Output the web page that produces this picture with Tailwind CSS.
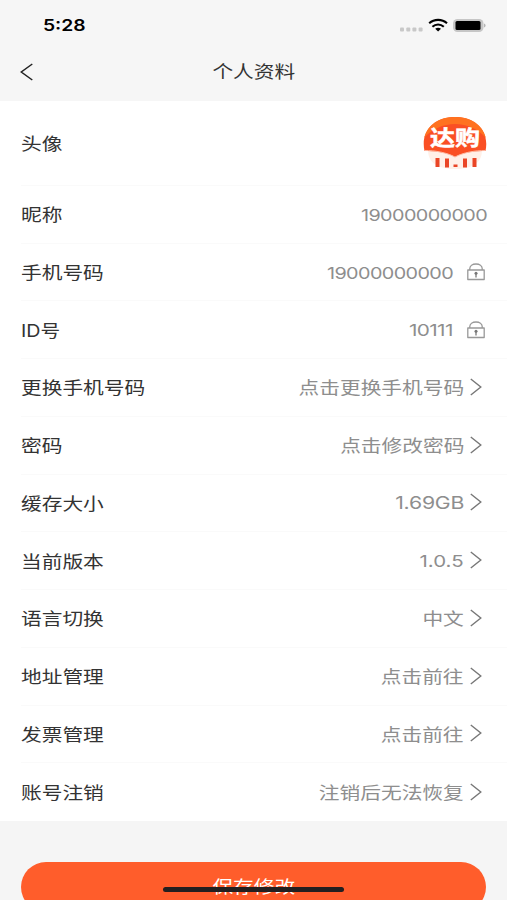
<!DOCTYPE html>
<html lang="zh-CN">
<head>
    <meta charset="UTF-8">
    <meta name="viewport" content="width=device-width, initial-scale=1.0">
    <title>个人资料</title>
    <script src="https://cdn.jsdelivr.net/npm/@tailwindcss/browser@4"></script>
</head>

<body class="bg-[#f5f5f5] font-['Inter','Noto_Sans_CJK_SC',sans-serif] text-[17.4px] text-[#333] h-[900px] overflow-hidden relative whitespace-nowrap">
    <svg class="hidden">
        <symbol id="lock" viewBox="0 0 20 18">
            <path d="M1.800 7h16.400v9.500H1.800zM3.800 7V5.500C3.800 2.800 6.500 1 10 1s6.200 1.800 6.200 4.500V7" fill="none" stroke="#999" stroke-width="1.300" stroke-linejoin="round"/>
            <path d="M10 10v4.500" stroke="#777" stroke-width="1.300"/>
            <circle cx="10" cy="10.300" r="1.500" fill="#777"/>
        </symbol>
        <symbol id="arrow" viewBox="0 0 12 18">
            <path d="M.8 1l10 8-10 8" fill="none" stroke="#777" stroke-width="1.400"/>
        </symbol>
    </svg>

    <header class="h-[101px] bg-[#f6f6f6]">
        <div class="h-[46px] pt-[5px] pl-[43px] pr-[20px] flex items-center justify-between text-black">
            <span class="origin-left scale-x-[1.22] pt-px text-[15.8px] font-semibold">5:28</span>
            <svg class="w-[88px] h-[16px]" viewBox="0 0 88 16">
                <g fill="#c8c8c8">
                    <rect x="1" y="9.500" width="4" height="4" rx="1"/>
                    <rect x="7.300" y="9.500" width="4" height="4" rx="1"/>
                    <rect x="13.400" y="9.500" width="4" height="4" rx="1"/>
                    <rect x="19.600" y="9.500" width="4" height="4" rx="1"/>
                </g>
                <g fill="none" stroke="#000" stroke-width="2.100">
                    <path d="M30.200 5.300c5-4.600 12.800-4.600 17.800 0"/>
                    <path d="M33.400 8.700c3.300-3 8.100-3 11.400 0"/>
                </g>
                <path d="M36.200 10.800c1.700-1.500 4.100-1.500 5.800 0l-2.900 2.700z"/>
                <rect x="54" y="1" width="30.500" height="13" rx="4.500" fill="#c6c6c6"/>
                <rect x="56.500" y="3" width="25" height="9" rx="1.500"/>
                <path d="M85.300 5.500c1.500.5 1.500 3.500 0 4z" fill="#999"/>
            </svg>
        </div>
        <div class="relative h-[50px] flex items-center justify-center">
            <svg class="absolute left-[20px] top-[17px] w-[13px] h-[18px]" viewBox="0 0 13 18" fill="none" stroke="#222" stroke-width="1.500">
                <path d="M12.300 1L1.300 9l11 8"/>
            </svg>
            <h1 class="scale-x-[1.19] pt-[2px]">个人资料</h1>
        </div>
    </header>

    <main class="h-[720px] bg-white">
        <div class="ml-[21px] pr-[19px] h-[85px] flex items-center justify-between border-b border-[#fafafa]">
            <span class="origin-left scale-x-[1.19] pt-[2px]">头像</span>
            <svg class="w-[66px] h-[56px]" viewBox="0 0 66 56">
                <path d="M6 35h54c0 13-10 19-27 19S6 48 6 35z" fill="#fff0e8"/>
                <path d="M2.500 36C-2 15 14 2 33 2s35 13 30.500 34c-11 0-22 1-30.500 6-8.500-5-19.500-6-30.500-6z" fill="#fa4f24"/>
                <path d="M2 23C6 9 17 2 33 2s27 7 31 21C56 14 45 9 33 9S10 14 2 23z" fill="#ff7220"/>
                <path d="M2.500 35.500c11 0 22 2 30.500 6.500 8.500-4.500 19.500-6.500 30.500-6.500" fill="none" stroke="#ffb9a2" stroke-width="1"/>
                <g fill="#ea4526">
                    <rect x="13.500" y="43" width="4" height="9"/>
                    <rect x="23" y="43.500" width="4" height="9"/>
                    <rect x="31.500" y="49.500" width="4" height="2.500"/>
                    <rect x="41" y="43.500" width="4" height="9"/>
                    <rect x="50.500" y="43" width="4" height="9"/>
                </g>
                <text x="8" y="30" textLength="50" lengthAdjust="spacingAndGlyphs" font-size="21" font-weight="700" fill="#fff" stroke="#fff" stroke-width=".5">达购</text>
            </svg>
        </div>

        <div class="h-[635px] grid grid-rows-11 text-[#8e8e8e]">
            <div class="ml-[21px] pr-[20px] flex items-center justify-between border-b border-[#fafafa]">
                <span class="origin-left scale-x-[1.19] pt-[2px] text-[#333]">昵称</span>
                <span class="origin-right scale-x-[1.2] pt-[2px] text-[16.500px] tracking-[-0.5px]">19000000000</span>
            </div>
            <div class="ml-[21px] pr-[21px] flex items-center border-b border-[#fafafa]">
                <span class="origin-left scale-x-[1.19] pt-[2px] text-[#333]">手机号码</span>
                <span class="ml-auto origin-right scale-x-[1.2] pt-[2px] text-[16.500px] tracking-[-0.5px]">19000000000</span>
                <svg class="ml-[13px] w-[20px] h-[18px]"><use href="#lock"/></svg>
            </div>
            <div class="ml-[21px] pr-[21px] flex items-center border-b border-[#fafafa]">
                <span class="origin-left scale-x-[1.13] pt-[2px] text-[#333]">ID号</span>
                <span class="ml-auto origin-right scale-x-[1.26] pt-[2px] text-[16.500px] tracking-[-0.5px]">10111</span>
                <svg class="ml-[13px] w-[20px] h-[18px]"><use href="#lock"/></svg>
            </div>
            <div class="ml-[21px] pr-[25px] flex items-center border-b border-[#fafafa]">
                <span class="origin-left scale-x-[1.19] pt-[2px] text-[#333]">更换手机号码</span>
                <span class="ml-auto origin-right scale-x-[1.19] pt-[2px]">点击更换手机号码</span>
                <svg class="mb-px ml-[6px] w-[12px] h-[18px]"><use href="#arrow"/></svg>
            </div>
            <div class="ml-[21px] pr-[25px] flex items-center border-b border-[#fafafa]">
                <span class="origin-left scale-x-[1.19] pt-[2px] text-[#333]">密码</span>
                <span class="ml-auto origin-right scale-x-[1.19] pt-[2px]">点击修改密码</span>
                <svg class="mb-px ml-[6px] w-[12px] h-[18px]"><use href="#arrow"/></svg>
            </div>
            <div class="ml-[21px] pr-[25px] flex items-center border-b border-[#fafafa]">
                <span class="origin-left scale-x-[1.19] pt-[2px] text-[#333]">缓存大小</span>
                <span class="ml-auto origin-right scale-x-[1.25] pt-[2px] text-[17px] tracking-[-0.2px]">1.69GB</span>
                <svg class="mb-px ml-[6px] w-[12px] h-[18px]"><use href="#arrow"/></svg>
            </div>
            <div class="ml-[21px] pr-[25px] flex items-center border-b border-[#fafafa]">
                <span class="origin-left scale-x-[1.19] pt-[2px] text-[#333]">当前版本</span>
                <span class="ml-auto origin-right scale-x-[1.24] pt-[2px] text-[16.500px]">1.0.5</span>
                <svg class="mb-px ml-[6px] w-[12px] h-[18px]"><use href="#arrow"/></svg>
            </div>
            <div class="ml-[21px] pr-[25px] flex items-center border-b border-[#fafafa]">
                <span class="origin-left scale-x-[1.19] pt-[2px] text-[#333]">语言切换</span>
                <span class="ml-auto origin-right scale-x-[1.19] pt-[2px]">中文</span>
                <svg class="mb-px ml-[6px] w-[12px] h-[18px]"><use href="#arrow"/></svg>
            </div>
            <div class="ml-[21px] pr-[25px] flex items-center border-b border-[#fafafa]">
                <span class="origin-left scale-x-[1.19] pt-[2px] text-[#333]">地址管理</span>
                <span class="ml-auto origin-right scale-x-[1.19] pt-[2px]">点击前往</span>
                <svg class="mb-px ml-[6px] w-[12px] h-[18px]"><use href="#arrow"/></svg>
            </div>
            <div class="ml-[21px] pr-[25px] flex items-center border-b border-[#fafafa]">
                <span class="origin-left scale-x-[1.19] pt-[2px] text-[#333]">发票管理</span>
                <span class="ml-auto origin-right scale-x-[1.19] pt-[2px]">点击前往</span>
                <svg class="mb-px ml-[6px] w-[12px] h-[18px]"><use href="#arrow"/></svg>
            </div>
            <div class="ml-[21px] pr-[25px] flex items-center">
                <span class="origin-left scale-x-[1.19] pt-[2px] text-[#333]">账号注销</span>
                <span class="ml-auto origin-right scale-x-[1.19] pt-[2px]">注销后无法恢复</span>
                <svg class="mb-px ml-[6px] w-[12px] h-[18px]"><use href="#arrow"/></svg>
            </div>
        </div>
    </main>

    <button class="block mt-[41px] ml-[21px] w-[465px] h-[50px] rounded-full bg-[#ff5d2b] text-white">
        <span class="inline-block scale-x-[1.19]">保存修改</span>
    </button>

    <!-- home indicator -->
    <div class="absolute left-[163px] top-[887px] w-[181px] h-[5px] rounded-full bg-[#231f20]"></div>
</body>
</html>
